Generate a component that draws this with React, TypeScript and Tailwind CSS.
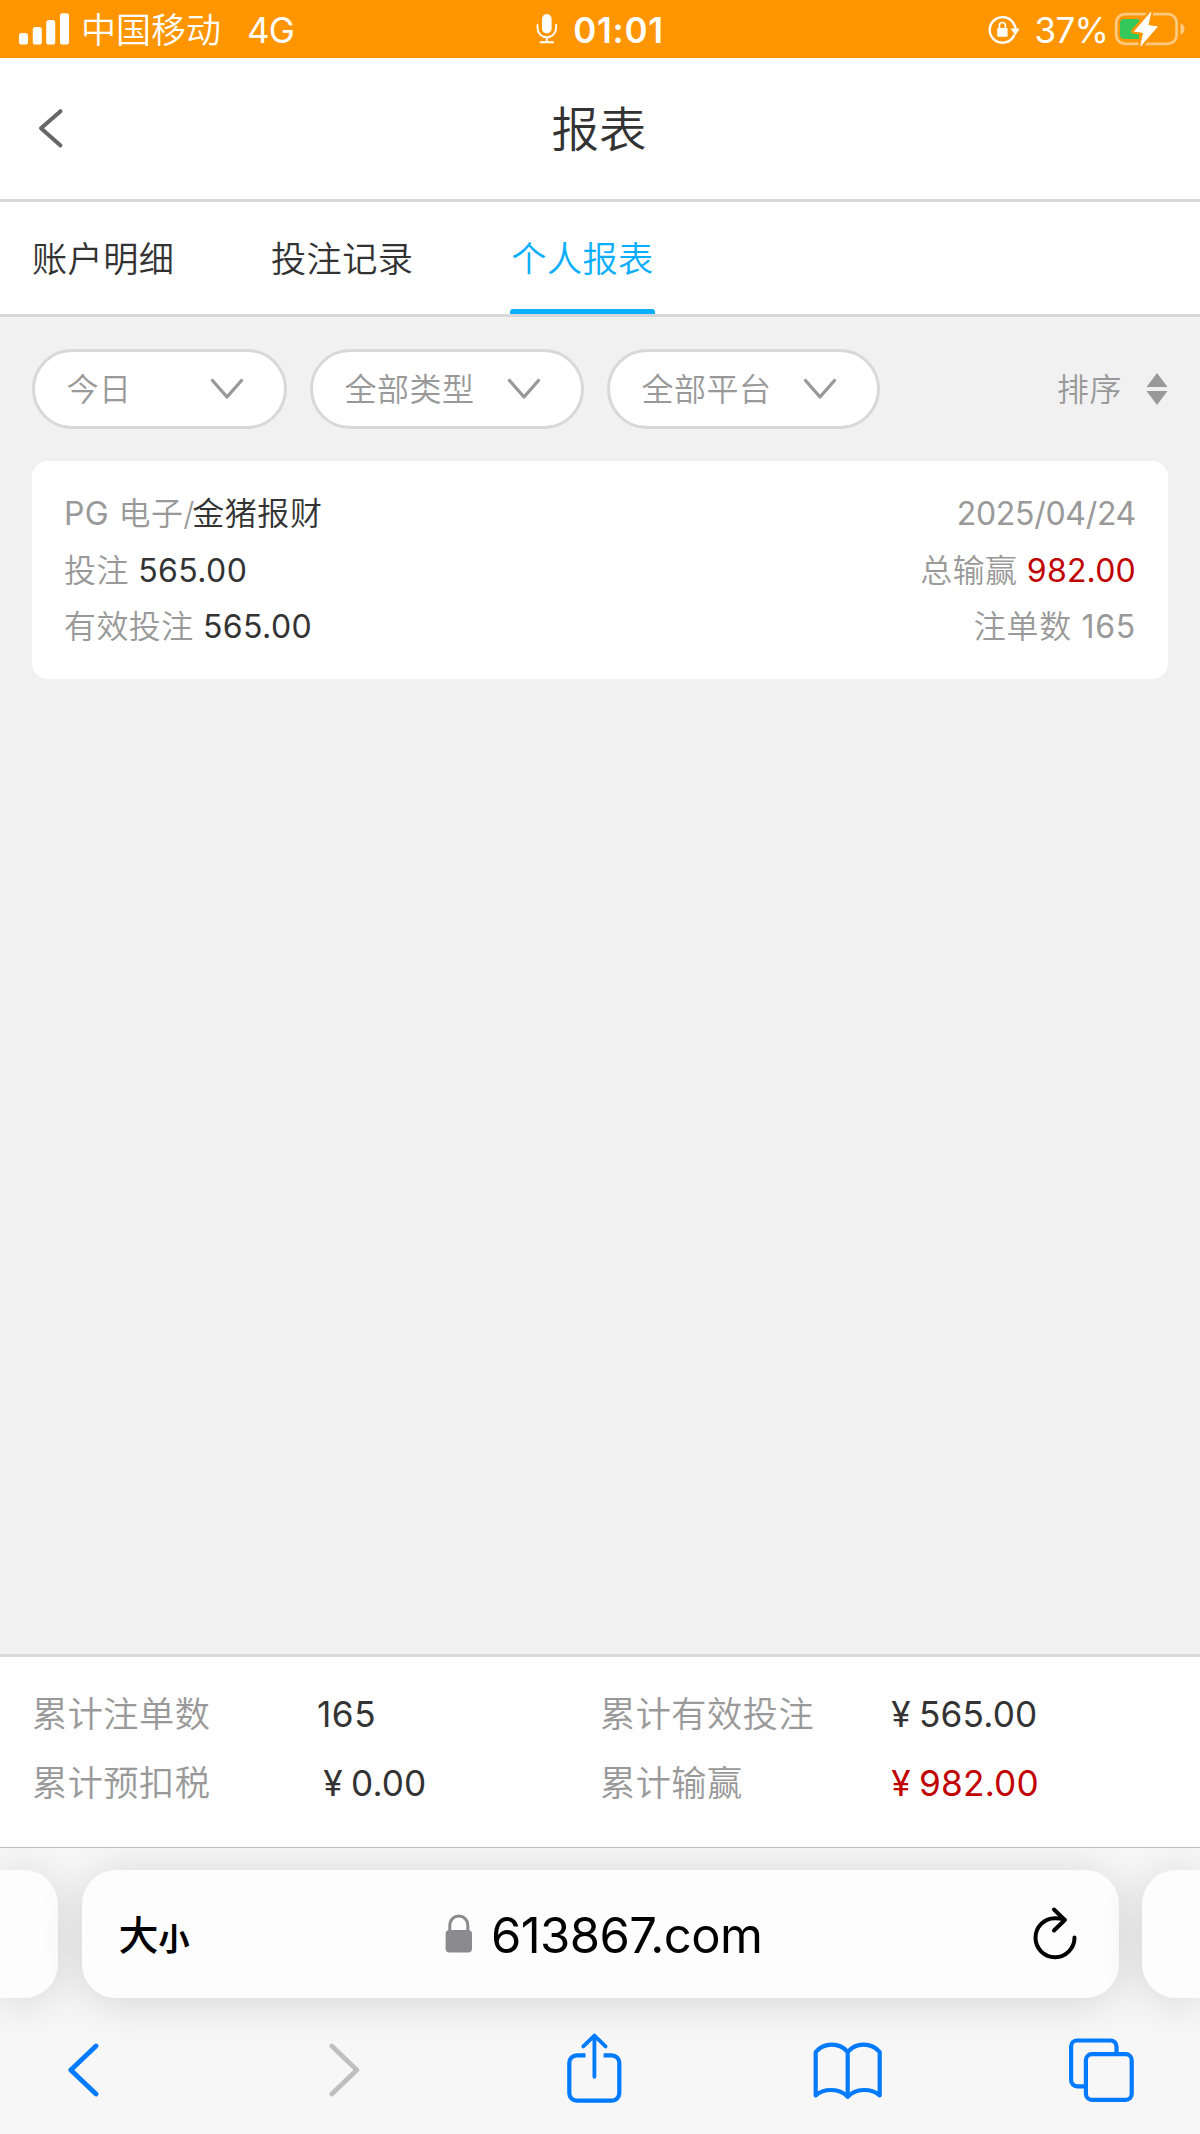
import clsx from "clsx";

interface Tab {
    label: string;
    active?: boolean;
}

const tabs: Tab[] = [
    { label: "账户明细" },
    { label: "投注记录" },
    { label: "个人报表", active: true },
];

const filters = [
    { label: "今日", width: "w-[255px]" },
    { label: "全部类型", width: "w-[274px]" },
    { label: "全部平台", width: "w-[273px]" },
];

function StatusBar() {
    return (
        <div className="grid h-[58px] shrink-0 grid-cols-[1fr_auto_1fr] items-center bg-[#ff9500] text-[35px] leading-[56px] text-white">
            <div className="flex items-center pl-[19px]">
                <svg width="51" height="32" viewBox="0 0 51 32" fill="#fff">
                    <rect x="0" y="20" width="9" height="11.5" rx="2.6" />
                    <rect x="13.8" y="14" width="9" height="17.5" rx="2.6" />
                    <rect x="27.2" y="7" width="9" height="24.5" rx="2.6" />
                    <rect x="41" y="0.3" width="9" height="31.2" rx="2.6" />
                </svg>
                <span className="ml-[11px] pt-[2px] font-[350]">中国移动</span>
                <span className="ml-[26px] pt-[2px] tracking-[-0.8px]">4G</span>
            </div>
            <div className="flex items-center">
                <svg width="22" height="32" viewBox="0 0 22 32" fill="none" stroke="#fff" strokeWidth="1.9" strokeLinecap="round">
                    <rect x="6" y="1" width="9.6" height="19.5" rx="4.8" fill="#fff" stroke="none" />
                    <path d="M1.5 12v3a9.3 9.3 0 0 0 18.6 0v-3M10.8 24.5V29M4.5 29.2h12.6" />
                </svg>
                <span className="ml-[15px] pt-[2px] font-semibold tracking-[0.7px]">01:01</span>
            </div>
            <div className="flex items-center justify-end pr-[14px]">
                <svg width="34" height="32" viewBox="0 0 34 32" fill="none">
                    <path d="M25.4 10.2A12.8 12.8 0 1 0 26 22.6" stroke="#fff" strokeWidth="2.4" strokeLinecap="round" />
                    <path d="M25.4 10.2A12.8 12.8 0 0 1 27.6 16" stroke="#fff" strokeWidth="2.4" />
                    <path d="M22.4 15.6h9.4l-4.4 6.6z" fill="#fff" />
                    <rect x="9.2" y="15" width="10.4" height="8.8" rx="1.2" fill="#fff" />
                    <path d="M11.4 15.5v-3a3 3 0 0 1 6 0v3" stroke="#fff" strokeWidth="1.7" />
                </svg>
                <span className="ml-[12.5px] pt-[2px] tracking-[-0.8px]">37%</span>
                <svg className="ml-[6px]" width="72" height="36" viewBox="0 0 72 36">
                    <rect x="2.2" y="3.2" width="60.4" height="29.6" rx="8.5" fill="none" stroke="#ffca80" strokeWidth="2.8" />
                    <path d="M66.5 12.3c5.4 1.8 5.4 9.6 0 11.4z" fill="#ffca80" />
                    <path d="M10 8h15v20H10a4 4 0 0 1-4-4V12a4 4 0 0 1 4-4z" fill="#34c759" />
                    <path d="M36.8 1.4 19.8 20.2 29.4 21.4 26.8 34.8 43.6 15.8 33.9 14.6z" fill="#fff" stroke="#ff9500" strokeWidth="5" strokeLinejoin="round" />
                    <path d="M36.8 1.4 20.6 20.2 29.6 21.4 26.8 34.8 43.2 15.8 33.9 14.6z" fill="#fff" stroke="#fff" strokeWidth="1" strokeLinejoin="round" />
                </svg>
            </div>
        </div>
    );
}

function Header() {
    return (
        <header className="grid h-[144px] shrink-0 grid-cols-[1fr_auto_1fr] items-center border-b-3 border-[#d8d8d8] bg-white">
            <svg className="ml-[37px]" width="28" height="44" viewBox="0 0 28 44" fill="none">
                <path d="M23.5 4.2 4 21.2l19.5 17.2" stroke="#666" strokeWidth="4" strokeLinecap="round" strokeLinejoin="round" />
            </svg>
            <h1 className="pt-[2px] pr-[2px] text-[47.5px] leading-none font-[350] text-[#333]">报表</h1>
        </header>
    );
}

function TabBar() {
    return (
        <nav className="flex h-[115px] shrink-0 gap-[94px] border-b-3 border-[#d8d8d8] bg-white pl-[32px] text-[35.2px] font-[350] tracking-[0.4px] text-[#333]">
            {tabs.map((tab) => (
                <div
                    key={tab.label}
                    className={clsx("flex w-[145px] flex-col justify-between", tab.active && "text-[#0cafff]")}
                >
                    <span className={clsx("h-[107px] whitespace-nowrap leading-[114px]", tab.active && "text-center")}>
                        {tab.label}
                    </span>
                    {tab.active && <span className="h-[5px] rounded-t-[3px] bg-[#0cafff]" />}
                </div>
            ))}
        </nav>
    );
}

function FilterBar() {
    return (
        <div className="flex items-center gap-[23px] px-[32px] pt-[32px] text-[32px] font-[350] tracking-[0.5px] text-[#999]">
            {filters.map((filter) => (
                <button
                    key={filter.label}
                    className={clsx(
                        "flex h-[80px] items-center justify-between rounded-full border-3 border-[#d8d8d8] bg-white pl-[31.5px] pr-[39px]",
                        filter.width
                    )}
                >
                    <span className="pt-[1px]">{filter.label}</span>
                    <svg width="36" height="24" viewBox="0 0 36 24" fill="none">
                        <path d="M3.5 3.5 18 20 32.5 3.5" stroke="#999" strokeWidth="3.4" strokeLinecap="round" strokeLinejoin="round" />
                    </svg>
                </button>
            ))}
            <div className="ml-auto flex items-center">
                <span className="pt-[1px]">排序</span>
                <svg className="ml-[24px]" width="22" height="32" viewBox="0 0 22 32" fill="#999">
                    <path d="M11 0 21.5 14H.5z" />
                    <path d="M11 32 21.5 18H.5z" />
                </svg>
            </div>
        </div>
    );
}

function RecordCard() {
    return (
        <div className="mx-[32px] mt-[32px] rounded-[16px] bg-white px-[32px] pt-[25px] pb-[23px] text-[32px] leading-[56.5px] font-[350] tracking-[0.4px] text-[#999]">
            <div className="flex justify-between">
                <span>
                    <span className="font-normal">PG</span> 电子<span className="tracking-[-2.3px]">/</span>
                    <span className="tracking-[0.6px] text-[#333]">金猪报财</span>
                </span>
                <span className="font-normal tracking-[-0.3px]">2025/04/24</span>
            </div>
            <div className="flex justify-between">
                <span>投注 <span className="font-normal text-[#333]">565.00</span></span>
                <span>总输赢 <span className="font-normal tracking-[0.2px] text-[#c10000]">982.00</span></span>
            </div>
            <div className="flex justify-between">
                <span>有效投注 <span className="font-normal text-[#333]">565.00</span></span>
                <span className="tracking-[0.7px]">注单数 <span className="font-normal">165</span></span>
            </div>
        </div>
    );
}

function Money({ value }: { value: string }) {
    return (
        <>
            <span className="inline-block w-[36px] text-center">¥</span>
            {value}
        </>
    );
}

function Summary() {
    return (
        <div className="grid h-[193px] shrink-0 grid-cols-[283px_285px_283px_1fr] content-start border-t-3 border-[#d8d8d8] bg-[#fefefe] pl-[32px] pt-[23px] text-[35.2px] leading-[69px] font-[350] tracking-[0.5px] text-[#999]">
            <span>累计注单数</span>
            <span className="pl-[2px] font-normal tracking-[0.5px] text-[#333]">165</span>
            <span>累计有效投注</span>
            <span className="font-normal tracking-[0.2px] text-[#333]"><Money value="565.00" /></span>
            <span>累计预扣税</span>
            <span className="font-normal tracking-[0.1px] text-[#333]"><Money value="0.00" /></span>
            <span>累计输赢</span>
            <span className="font-normal tracking-[0.2px] text-[#c10000]"><Money value="982.00" /></span>
        </div>
    );
}

function AddressBar() {
    return (
        <div className="flex h-[128px] gap-[23.5px] *:bg-[#fdfdfd] *:shadow-[0_4px_44px_rgba(0,0,0,0.14)]">
            <div className="w-[58px] rounded-r-[34px]" />
            <div className="flex w-[1037px] items-center rounded-[34px] pl-[37px] pr-[39px]">
                <div className="flex w-[326px] items-baseline pt-[3px] text-black">
                    <span className="text-[40px] font-medium">大</span>
                    <span className="text-[31px] font-bold">小</span>
                </div>
                <svg width="28" height="40" viewBox="0 0 28 40">
                    <path d="M4.8 18V11a9 9 0 0 1 18 0v7" fill="none" stroke="#8a8a8f" strokeWidth="3" />
                    <rect x="0.6" y="16" width="26.4" height="22.6" rx="4" fill="#8a8a8f" />
                </svg>
                <span className="ml-[18.5px] pt-[3px] text-[49px] tracking-[-0.6px] text-black">613867.com</span>
                <svg className="ml-auto" width="48" height="58" viewBox="0 0 48 58" fill="none" stroke="#000" strokeWidth="4" strokeLinecap="round" strokeLinejoin="round">
                    <path d="M42.5 32.5A19.5 19.5 0 1 1 23 13.2q5 0 9.6 1.4" />
                    <path d="M22 4.5 32.8 15 22 25.5" />
                </svg>
            </div>
            <div className="w-[58px] rounded-l-[34px]" />
        </div>
    );
}

function Toolbar() {
    return (
        <div className="mt-[34px] flex pl-[68px]">
            <svg width="32" height="76" viewBox="0 0 32 76" fill="none" stroke="#007aff" strokeWidth="4.8" strokeLinecap="round" strokeLinejoin="round">
                <path d="M28 14 2.8 38 28 62" />
            </svg>
            <svg className="ml-[229px]" width="32" height="76" viewBox="0 0 32 76" fill="none" stroke="#bfbfbf" strokeWidth="4.8" strokeLinecap="round" strokeLinejoin="round">
                <path d="m2.8 14 25 24-25 24" />
            </svg>
            <svg className="ml-[205px]" width="58" height="76" viewBox="0 0 58 76" fill="none" stroke="#007aff" strokeWidth="4.2">
                <path d="M19.5 23.3h-8.7a7.5 7.5 0 0 0-7.5 7.5v30.4a7.5 7.5 0 0 0 7.5 7.5h35a7.5 7.5 0 0 0 7.5-7.5V30.8a7.5 7.5 0 0 0-7.5-7.5h-8.2" />
                <path d="M28.4 3.8v41M17.3 14.4 28.4 3.6l11.2 10.8" strokeWidth="3.8" strokeLinecap="round" strokeLinejoin="round" />
            </svg>
            <svg className="ml-[188px]" width="72" height="76" viewBox="0 0 72 76" fill="none" stroke="#007aff" strokeWidth="4.2" strokeLinecap="round" strokeLinejoin="round">
                <path d="M3.7 20c8.3-9.8 24-9.8 32 0 8-9.8 23.7-9.8 32 0v43.4c-8.3-7.4-24-7.4-32 1.4-8-8.8-23.7-8.8-32-1.4z" />
                <path d="M35.7 20v44.5" />
            </svg>
            <svg className="ml-[184px]" width="68" height="76" viewBox="0 0 68 76" fill="none" stroke="#007aff" strokeWidth="4.2">
                <rect x="17.9" y="22.2" width="45.8" height="45.6" rx="6" />
                <path d="M48.5 22v-7.5a6 6 0 0 0-6-6H9.1a6 6 0 0 0-6 6v33.8a6 6 0 0 0 6 6H18" />
            </svg>
        </div>
    );
}

export default function App() {
    return (
        <div className="flex h-[2134px] w-[1200px] flex-col overflow-hidden bg-[#f1f1f1] font-[Inter,'Noto_Sans_CJK_SC',sans-serif]">
            <StatusBar />
            <Header />
            <TabBar />
            <main className="flex-1">
                <FilterBar />
                <RecordCard />
            </main>
            <Summary />
            <footer className="h-[287px] shrink-0 overflow-hidden border-t border-[#bcbcbc] bg-[#f7f7f7] pt-[22px]">
                <AddressBar />
                <Toolbar />
            </footer>
        </div>
    );
}
